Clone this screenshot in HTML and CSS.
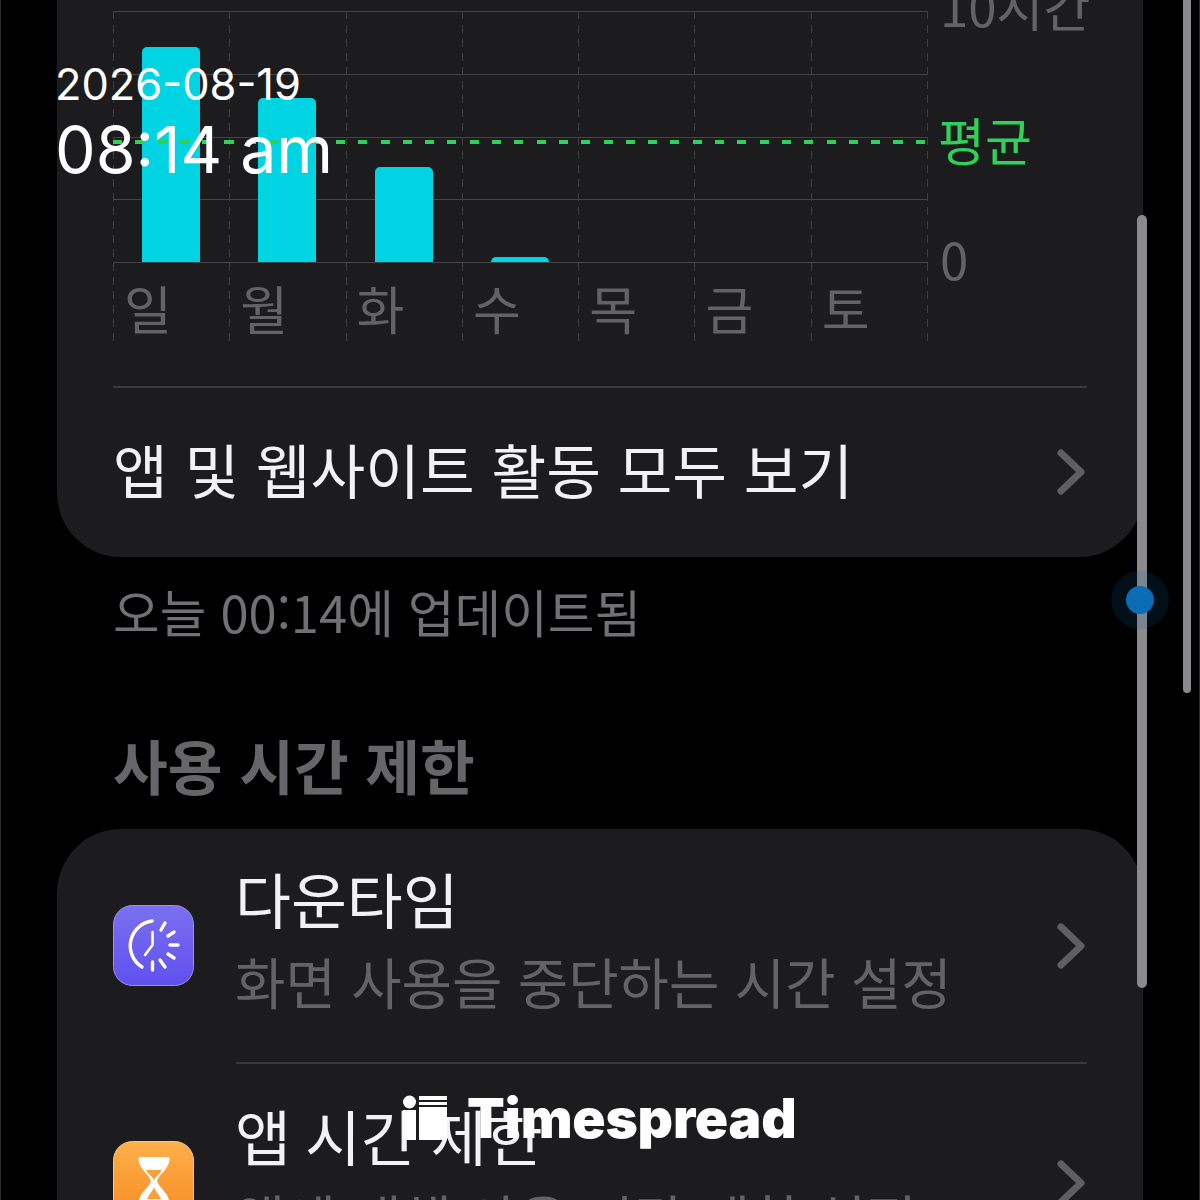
FILE: index.html
```html
<!DOCTYPE html>
<html lang="ko">

<head>
    <meta charset="UTF-8">
    <meta name="viewport" content="width=device-width, initial-scale=1.0">
    <title>스크린 타임</title>
    <link rel="stylesheet" href="styles.css">
</head>

<body>
    <div id="screen">
        <main class="content">

            <section class="card card-chart">
                <div class="chart">
                    <div class="plot">
                        <div class="hlines">
                            <span></span><span></span><span></span><span></span><span></span>
                        </div>
                        <div class="vlines">
                            <span></span><span></span><span></span><span></span>
                            <span></span><span></span><span></span><span></span>
                        </div>
                        <div class="bars">
                            <div class="bar-col"><div class="bar" style="height: 215px"></div></div>
                            <div class="bar-col"><div class="bar" style="height: 164px"></div></div>
                            <div class="bar-col"><div class="bar" style="height: 95px"></div></div>
                            <div class="bar-col"><div class="bar" style="height: 5px"></div></div>
                            <div class="bar-col"></div>
                            <div class="bar-col"></div>
                            <div class="bar-col"></div>
                        </div>
                        <div class="avg-line"></div>
                        <div class="days">
                            <span>일</span><span>월</span><span>화</span><span>수</span><span>목</span><span>금</span><span>토</span>
                        </div>
                    </div>
                    <div class="axis">
                        <span class="axis-top">10시간</span>
                        <span class="axis-avg">평균</span>
                        <span class="axis-zero">0</span>
                    </div>
                </div>
                <div class="link-row">
                    <span class="link-text">앱 및 웹사이트 활동 모두 보기</span>
                    <svg class="chevron" width="30" height="46" viewBox="0 0 30 46"><path d="M6 4 L26 23 L6 42" /></svg>
                </div>
            </section>

            <p class="updated">오늘 00:14에 업데이트됨</p>
            <h2 class="section-title">사용 시간 제한</h2>

            <section class="card card-list">
                <div class="list-row">
                    <svg class="app-icon" width="82" height="82" viewBox="0 0 82 82">
                        <defs>
                            <linearGradient id="purple" x1="0" y1="0" x2="0" y2="1">
                                <stop offset="0" stop-color="#7b70f0" />
                                <stop offset="1" stop-color="#5f50ee" />
                            </linearGradient>
                        </defs>
                        <rect x="0.5" y="0.5" width="80" height="80" rx="19" fill="url(#purple)" stroke="#9a92f4" />
                        <g fill="none" stroke="#fff" stroke-width="3.4" stroke-linecap="round">
                            <path d="M39 16 A25 25 0 0 0 29 62" />
                            <path d="M39.500 27 V40 L32 50" stroke-width="2.600" />
                            <path d="M52 18 L48 25" />
                            <path d="M61 27 L55 31" />
                            <path d="M65 40 L57 40" />
                            <path d="M61 53 L55 49" />
                            <path d="M52 62 L47 55" />
                            <path d="M39.500 65 V57" />
                        </g>
                    </svg>
                    <div class="row-body row-body-first">
                        <div class="row-text">
                            <div class="row-title">다운타임</div>
                            <div class="row-sub">화면 사용을 중단하는 시간 설정</div>
                        </div>
                        <svg class="chevron" width="30" height="46" viewBox="0 0 30 46"><path d="M6 4 L26 23 L6 42" /></svg>
                    </div>
                </div>
                <div class="list-row">
                    <svg class="app-icon" width="82" height="82" viewBox="0 0 82 82">
                        <defs>
                            <linearGradient id="orange" x1="0" y1="0" x2="0" y2="1">
                                <stop offset="0" stop-color="#fdb04c" />
                                <stop offset="1" stop-color="#f88a1f" />
                            </linearGradient>
                        </defs>
                        <rect x="0.5" y="0.5" width="80" height="80" rx="19" fill="url(#orange)" stroke="#fcc685" />
                        <path d="M27 16 H55 Q57 16 56.500 19 C55 29 46 33 44 40 C46 47 55 51 56.500 61 Q57 64 55 64 H27 Q25 64 25.500 61 C27 51 36 47 38 40 C36 33 27 29 25.500 19 Q25 16 27 16 Z" fill="#fff" />
                        <path d="M33 29 H49 C47 33 43 35 41 39 C39 35 35 33 33 29 Z" fill="#f9a03a" />
                        <path d="M41 46 C40 50 36 53 34 58 H48 C46 53 42 50 41 46 Z" fill="#f9a03a" />
                    </svg>
                    <div class="row-body">
                        <div class="row-text">
                            <div class="row-title row-title-spaced">앱 시간 제한</div>
                            <div class="row-sub">앱에 대해 사용 시간 제한 설정</div>
                        </div>
                        <svg class="chevron" width="30" height="46" viewBox="0 0 30 46"><path d="M6 4 L26 23 L6 42" /></svg>
                    </div>
                </div>
            </section>

        </main>

        <div class="scroll-inner"></div>
        <div class="scroll-outer"></div>
        <div class="scroll-dot"></div>

        <div class="stamp">
            <div class="stamp-date">2026-08-19</div>
            <div class="stamp-time">08:14 am</div>
        </div>

        <div class="watermark">
            <svg width="46" height="46" viewBox="0 0 46 46">
                <circle cx="7.500" cy="7" r="6.500" fill="#fff" />
                <rect x="1" y="15" width="13" height="30" fill="#fff" />
                <rect x="17" y="1" width="28" height="4" fill="#fff" />
                <rect x="17" y="7" width="28" height="3" fill="#fff" />
                <rect x="17" y="12" width="28" height="33" fill="#fff" />
            </svg>
            <span>Timespread</span>
        </div>
    </div>
</body>

</html>
```

FILE: styles.css
```css
* {
    box-sizing: border-box;
}

body {
    margin: 0;
    background-color: #000;
    font-family: 'Noto Sans CJK KR', 'Noto Sans', sans-serif;
}

#screen {
    position: relative;
    width: 1200px;
    height: 1200px;
    overflow: hidden;
    box-shadow: inset 1px 0 #2c2c2c, inset -1px 0 #2c2c2c;
}

.content {
    width: 1086px;
    margin-left: 57px;
}

.card {
    background-color: #1c1c1e;
    border-radius: 0 0 64px 64px;
}

/* chart */
.card-chart {
    height: 557px;
    padding: 11px 56px 0;
}

.chart {
    display: flex;
    height: 377px;
    border-bottom: 2px solid #39393c;
}

.plot {
    position: relative;
    width: 815px;
    height: 330px;
}

.hlines {
    position: absolute;
    inset: 0 0 auto 0;
    height: 252px;
    display: flex;
    flex-direction: column;
    justify-content: space-between;
}

.hlines span {
    display: block;
    height: 1px;
    background-color: #454548;
}

.vlines {
    position: absolute;
    inset: 0;
    display: flex;
    justify-content: space-between;
}

.vlines span {
    width: 1px;
    background-image: repeating-linear-gradient(to bottom, #3e3e41 0 8px, transparent 8px 14px);
}

.bars {
    position: absolute;
    inset: 0 0 auto 0;
    height: 251px;
    display: grid;
    grid-template-columns: repeat(7, 116.3px);
}

.bar-col {
    display: flex;
    align-items: flex-end;
    padding-left: 29px;
}

.bar {
    width: 58px;
    background-color: #00d4e3;
    border-radius: 5px 5px 0 0;
}

.avg-line {
    position: absolute;
    left: 0;
    right: 0;
    top: 129px;
    height: 4px;
    background-image: repeating-linear-gradient(to right, #30d158 0 9px, transparent 9px 22.3px);
}

.days {
    position: absolute;
    left: 0;
    top: 262px;
    display: grid;
    grid-template-columns: repeat(7, 116.3px);
    font-size: 52px;
    line-height: 70px;
    color: #636367;
}

.days span {
    padding-left: 11px;
}

.axis {
    position: relative;
    flex: 1;
    font-size: 51px;
    color: #636367;
}

.axis span {
    position: absolute;
    left: 12px;
    line-height: 60px;
    white-space: nowrap;
}

.axis-top {
    top: -36px;
}

.axis .axis-avg {
    left: 10px;
    top: 98px;
    color: #30d158;
}

.axis-zero {
    top: 217px;
}

/* rows */
.link-row {
    display: flex;
    align-items: center;
    justify-content: space-between;
    height: 168px;
    padding-right: 2px;
}

.link-text {
    margin-bottom: 8px;
    font-size: 59.5px;
    color: #f2f2f3;
}

.chevron {
    flex: none;
}

.chevron path {
    fill: none;
    stroke: #5f5f63;
    stroke-width: 7;
    stroke-linecap: round;
    stroke-linejoin: round;
}

.updated {
    margin: 0;
    padding: 23px 56px 0;
    font-size: 50.7px;
    line-height: 62px;
    color: #717175;
}

.section-title {
    margin: 0;
    padding: 80px 56px 0;
    font-size: 59.5px;
    line-height: 84px;
    font-weight: 700;
    color: #66666a;
}

.card-list {
    margin-top: 23px;
    padding-left: 56px;
    padding-right: 56px;
    border-radius: 64px 64px 0 0;
}

.list-row {
    display: flex;
    align-items: center;
    height: 233px;
}

.list-row + .list-row {
    height: 240px;
}

.app-icon {
    flex: none;
}

.row-body {
    flex: 1;
    display: flex;
    align-items: center;
    justify-content: space-between;
    margin-left: 41px;
    height: 100%;
    padding-right: 2px;
    border-top: 2px solid #39393c;
}

.row-body-first {
    border-top: none;
}

.row-text {
    margin-left: -1px;
    padding-bottom: 14px;
}

.row-title {
    font-size: 60.8px;
    line-height: 83px;
    color: #f2f2f3;
}

.row-title-spaced {
    word-spacing: -3px;
}

.row-sub {
    font-size: 54.8px;
    line-height: 83px;
    white-space: nowrap;
    color: #636367;
}

/* scroll indicators and overlays */
.scroll-inner {
    position: absolute;
    left: 1137px;
    top: 215px;
    width: 10px;
    height: 773px;
    background-color: #8a8a8c;
    border-radius: 5px;
}

.scroll-outer {
    position: absolute;
    left: 1183px;
    top: -10px;
    width: 8px;
    height: 703px;
    background-color: #8a8a8c;
    border-radius: 4px;
}

.scroll-dot {
    position: absolute;
    left: 1126px;
    top: 586px;
    width: 28px;
    height: 28px;
    border-radius: 50%;
    background-color: #0a6cb4;
    box-shadow: 0 0 0 15px rgba(10, 108, 180, 0.14);
}

.stamp {
    position: absolute;
    left: 55px;
    top: 58px;
    font-family: Inter, sans-serif;
    color: #fff;
}

.stamp-date {
    font-size: 43.4px;
    line-height: 52px;
}

.stamp-time {
    font-size: 64.5px;
    line-height: 80px;
}

.watermark {
    position: absolute;
    left: 402px;
    top: 1095px;
    display: flex;
    align-items: center;
    gap: 19px;
    font-family: Inter, sans-serif;
    font-size: 55px;
    font-weight: 900;
    letter-spacing: -0.2px;
    line-height: 46px;
    color: #fff;
}
```
